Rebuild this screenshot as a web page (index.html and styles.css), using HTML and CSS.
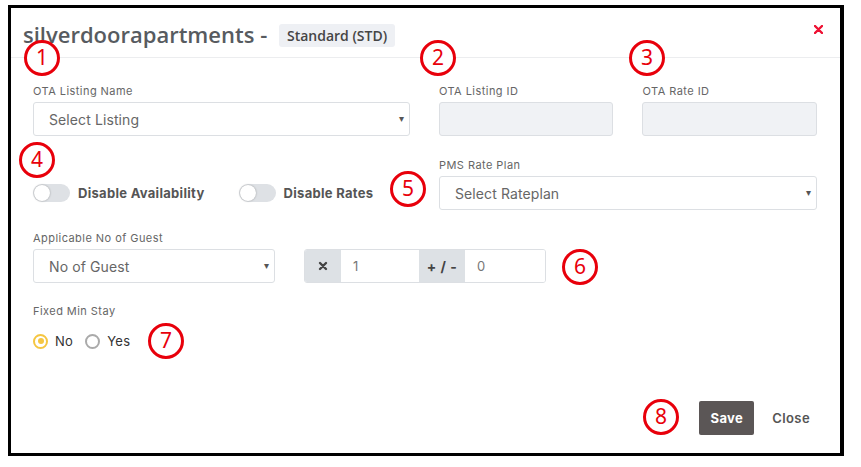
FILE: index.html
```html
<!DOCTYPE html>
<html>
<head>
<meta charset="utf-8">
<link rel="stylesheet" href="styles.css">
</head>
<body>
<div class="frame">
  <div class="modal-header">
    <h1 class="title">silverdoorapartments - <span class="badge">Standard (STD)</span></h1>
    <span class="close-x">
      <svg width="9" height="9" viewBox="0 0 9 9"><path d="M1 1L8 8M8 1L1 8" stroke="#ee1133" stroke-width="2.4" stroke-linecap="round"/></svg>
    </span>
  </div>
  <div class="modal-body">
    <div class="row row1">
      <div class="field w-listing">
        <label class="lbl">OTA Listing Name</label>
        <div class="select">Select Listing<span class="caret">&#9662;</span></div>
      </div>
      <div class="field w-id">
        <label class="lbl">OTA Listing ID</label>
        <div class="input disabled"></div>
      </div>
      <div class="field w-id">
        <label class="lbl">OTA Rate ID</label>
        <div class="input disabled"></div>
      </div>
    </div>
    <div class="row row2">
      <div class="toggles">
        <div class="toggle-item"><span class="switch"><span class="knob"></span></span><span class="toggle-text">Disable Availability</span></div>
        <div class="toggle-item"><span class="switch"><span class="knob"></span></span><span class="toggle-text">Disable Rates</span></div>
      </div>
      <div class="field w-rate">
        <label class="lbl">PMS Rate Plan</label>
        <div class="select">Select Rateplan<span class="caret">&#9662;</span></div>
      </div>
    </div>
    <div class="row row3">
      <div class="field w-guest">
        <label class="lbl">Applicable No of Guest</label>
        <div class="select">No of Guest<span class="caret">&#9662;</span></div>
      </div>
      <div class="input-group">
        <span class="addon addon-x">
          <svg width="10" height="10" viewBox="0 0 10 10"><path d="M2 2L8 8M8 2L2 8" stroke="#444" stroke-width="2.4" stroke-linecap="round"/></svg>
        </span>
        <span class="ig-input ig-1">1</span>
        <span class="addon addon-pm">+ / -</span>
        <span class="ig-input ig-2">0</span>
      </div>
    </div>
    <div class="row row4">
      <div class="field">
        <label class="lbl">Fixed Min Stay</label>
        <div class="radios">
          <span class="radio checked"></span><span class="radio-text">No</span>
          <span class="radio"></span><span class="radio-text">Yes</span>
        </div>
      </div>
    </div>
  </div>
  <div class="modal-footer">
    <button class="btn-save">Save</button>
    <button class="btn-close">Close</button>
  </div>

  <span class="mark m1">1</span>
  <span class="mark m2">2</span>
  <span class="mark m3">3</span>
  <span class="mark m4">4</span>
  <span class="mark m5">5</span>
  <span class="mark m6">6</span>
  <span class="mark m7">7</span>
  <span class="mark m8">8</span>
</div>
</body>
</html>
```
FILE: styles.css
```css
* { box-sizing: border-box; }
html, body { margin: 0; padding: 0; background: #fff; }
body { font-family: "Inter", "Open Sans", sans-serif; color: #555; }

.frame {
  position: relative;
  margin: 5px 0 0 8px;
  width: 836px;
  height: 451px;
  border: 3px solid #000;
  border-right-width: 4px;
  background: #fff;
  display: flex;
  flex-direction: column;
}

.modal-header {
  height: 50px;
  flex: none;
  border-bottom: 1px solid #ecedef;
  display: flex;
  align-items: flex-start;
  justify-content: space-between;
  padding: 0 17px 0 12px;
}
.title {
  margin: 12px 0 0 0;
  font-family: "Open Sans", sans-serif;
  font-weight: 600;
  font-size: 22px;
  line-height: 28px;
  color: #575b60;
  display: flex;
  align-items: center;
  white-space: pre;
}
.badge {
  margin-left: 6px;
  background: #eef0f4;
  color: #454545;
  font-size: 14px;
  font-weight: 600;
  padding: 0 8px;
  height: 23px;
  line-height: 23px;
  border-radius: 3px;
  position: relative;
  top: 1px;
}
.close-x { margin-top: 17px; display: flex; }

.modal-body { padding: 0 23px 0 22px; flex: 1; }
.row { display: flex; }
.row1 { margin-top: 26px; gap: 29px; }
.row2 { margin-top: 22px; gap: 29px; justify-content: space-between; }
.row3 { margin-top: 21px; gap: 29px; align-items: flex-end; }
.row4 { margin-top: 21px; }

.field { display: flex; flex-direction: column; }
.lbl {
  font-size: 11px;
  line-height: 14px;
  color: #666;
  margin-bottom: 4px;
  letter-spacing: 0.45px;
}
.w-listing { width: 378px; }
.w-id { width: 175px; }
.w-rate { width: 378px; }
.w-guest { width: 242px; }

.select, .input {
  height: 34px;
  border: 1px solid #dcdfe3;
  border-radius: 3px;
  font-size: 14px;
  color: #666;
  display: flex;
  align-items: center;
  padding-left: 15px;
  position: relative;
  letter-spacing: 0.1px;
}
.caret {
  position: absolute;
  right: 5px;
  top: 9px;
  font-size: 10px;
  color: #555;
}
.input.disabled { background: #f0f2f5; }

.toggles { display: flex; align-items: center; padding-top: 18px; }
.toggle-item { display: flex; align-items: center; margin-right: 34px; }
.switch {
  width: 37px;
  height: 18px;
  background: #dee1e5;
  border-radius: 9px;
  position: relative;
  margin-right: 8px;
}
.knob {
  position: absolute;
  left: 1px;
  top: 1px;
  width: 16px;
  height: 16px;
  background: #fff;
  border-radius: 50%;
  box-shadow: 0 0 2px rgba(0,0,0,0.35);
}
.toggle-text { font-size: 13px; font-weight: 700; color: #555; letter-spacing: 0.3px; }

.input-group {
  display: flex;
  width: 242px;
  height: 34px;
  border: 1px solid #dcdfe3;
  border-radius: 3px;
  overflow: hidden;
}
.addon {
  background: #dde1e5;
  display: flex;
  align-items: center;
  justify-content: center;
  font-size: 14px;
  font-weight: 700;
  color: #444;
}
.addon-x { width: 36px; }
.addon-pm { width: 46px; letter-spacing: 0.5px; }
.ig-input {
  background: #fff;
  display: flex;
  align-items: center;
  padding-left: 12px;
  font-size: 13px;
  color: #777;
}
.ig-1 { width: 78px; }
.ig-2 { flex: 1; }

.radios { display: flex; align-items: center; margin-top: 11px; }
.radio {
  width: 15px;
  height: 15px;
  border-radius: 50%;
  border: 2px solid #aaa;
  position: relative;
}
.radio.checked { border-color: #f5c642; }
.radio.checked::after {
  content: "";
  position: absolute;
  left: 2.5px;
  top: 2.5px;
  width: 6px;
  height: 6px;
  border-radius: 50%;
  background: #f5c642;
}
.radio-text { font-size: 13px; color: #333; margin: 0 12px 0 7px; letter-spacing: 0.3px; }

.modal-footer {
  height: 73px;
  flex: none;
  display: flex;
  align-items: flex-end;
  justify-content: flex-end;
  padding: 0 24px 18px 0;
}
.btn-save {
  width: 55px;
  height: 34px;
  background: #5b5656;
  color: #fff;
  border: none;
  border-radius: 2px;
  font-family: "Inter", sans-serif;
  font-weight: 700;
  font-size: 13px;
  letter-spacing: 0.3px;
}
.btn-close {
  margin-left: 12px;
  height: 34px;
  padding: 0 6px;
  background: none;
  border: none;
  color: #555;
  font-family: "Inter", sans-serif;
  font-weight: 600;
  font-size: 13px;
  letter-spacing: 0.4px;
}

.mark {
  position: absolute;
  width: 36px;
  height: 36px;
  border: 3.5px solid #e8000b;
  border-radius: 50%;
  background: #fff;
  color: #e8000b;
  font-family: "Noto Sans", sans-serif;
  font-size: 21px;
  line-height: 28px;
  text-align: center;
}
.m1 { left: 13px; top: 32px; }
.m2 { left: 409px; top: 32px; }
.m3 { left: 618px; top: 32px; }
.m4 { left: 8px; top: 134px; }
.m5 { left: 379px; top: 163px; }
.m6 { left: 551px; top: 241px; }
.m7 { left: 137px; top: 315px; }
.m8 { left: 632px; top: 391px; }
```
